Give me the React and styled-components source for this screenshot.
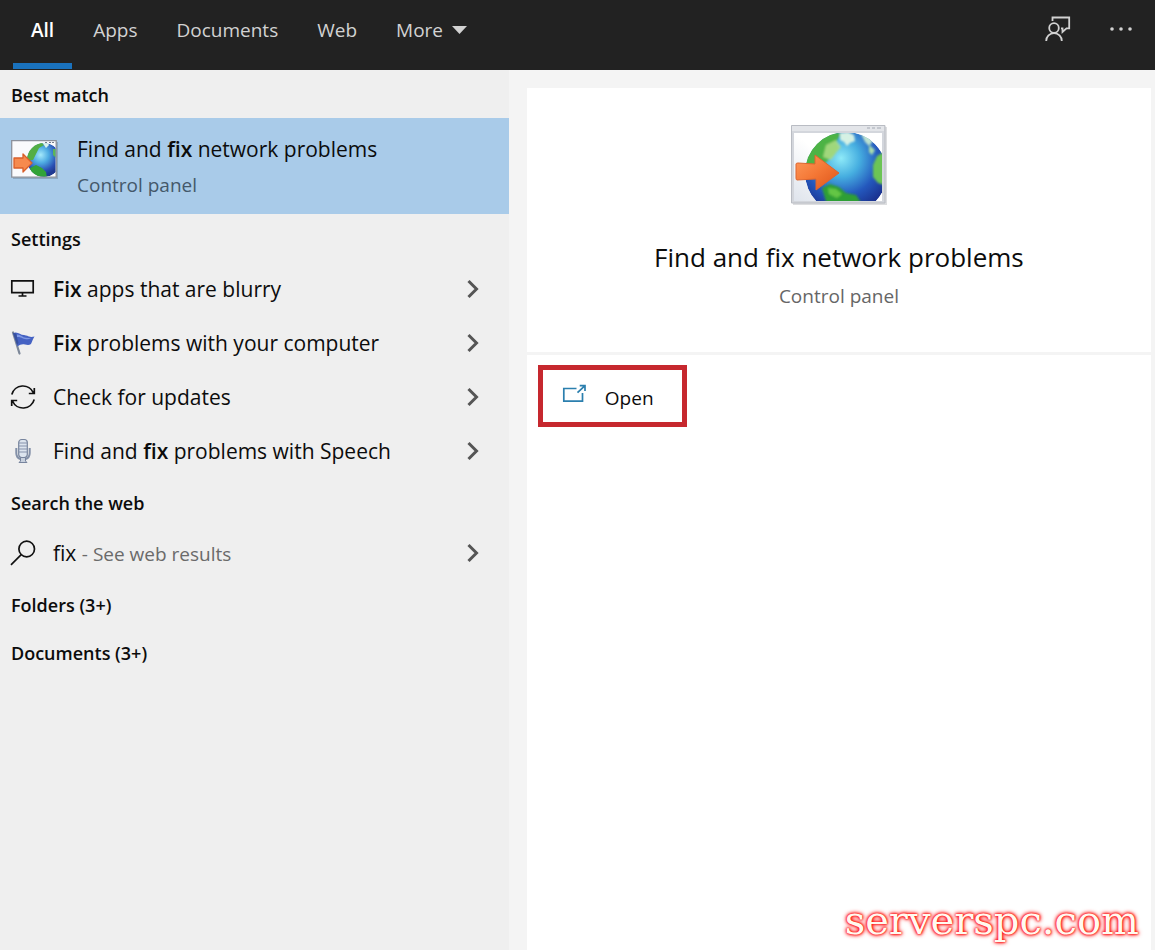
import React from 'react';
import styled, { createGlobalStyle } from 'styled-components';

const GlobalStyle = createGlobalStyle`
  *, *::before, *::after {
    box-sizing: border-box;
  }
  body {
    margin: 0;
    background: #f4f4f4;
    font-family: "Open Sans", "Noto Sans", sans-serif;
    color: #0c0c0c;
  }
  button {
    margin: 0;
    padding: 0;
    border: 0;
    background: none;
    font: inherit;
    color: inherit;
    text-align: left;
    cursor: pointer;
  }
  h1, h2, p {
    margin: 0;
  }
  svg {
    display: block;
    flex: none;
  }
`;

const Page = styled.div`
  position: relative;
  display: flex;
  flex-direction: column;
  min-height: 100vh;
`;

const Header = styled.header`
  display: flex;
  justify-content: space-between;
  height: 70px;
  padding: 0 22px 0 13px;
  background: #222;
  color: #d2d2d2;
`;

const Tabs = styled.nav`
  display: flex;
  gap: 3px;
`;

const Tab = styled.button`
  display: flex;
  align-items: center;
  gap: 9px;
  height: 69px;
  padding: 0 18px 4px;
  border-bottom: 6px solid ${({ $active }) => ($active ? '#1a72bd' : 'transparent')};
  color: ${({ $active }) => ($active ? '#fff' : 'inherit')};
  font-size: 19px;
  font-weight: ${({ $active }) => ($active ? 600 : 400)};
`;

const HeaderActions = styled.div`
  display: flex;
  align-items: center;
  gap: 38px;
  height: 58px;
`;

const Main = styled.main`
  display: grid;
  grid-template-columns: 63fr 80fr;
  flex: 1;
`;

const Results = styled.aside`
  background: #efefef;
`;

const SectionTitle = styled.h2`
  height: 48px;
  padding: 2px 11px 0;
  font-size: 18px;
  font-weight: 600;
  line-height: 46px;
`;

const BestMatch = styled.button`
  display: flex;
  gap: 18px;
  width: 100%;
  height: 96px;
  padding: 14px 11px;
  background: #a9cbe9;
`;

const BestIcon = styled.span`
  padding-top: 8px;
`;

const BestName = styled.span`
  display: block;
  font-size: 21px;
  line-height: 34px;
`;

const BestKind = styled.span`
  display: block;
  color: #44586a;
  font-size: 19px;
  line-height: 38px;
`;

const Row = styled.button`
  display: flex;
  align-items: center;
  width: 100%;
  height: 54px;
  padding: 0 29px 0 10px;
`;

const RowIcon = styled.span`
  width: 43px;
`;

const RowText = styled.span`
  flex: 1;
  font-size: 21px;
  line-height: 30px;
  white-space: nowrap;
`;

const Strong = styled.b`
  font-weight: 600;
`;

const Hint = styled.span`
  color: #6a6a6a;
  font-size: 19px;
`;

const Details = styled.section`
  display: flex;
  flex-direction: column;
  gap: 3px;
  padding: 18px 4px 0 18px;
`;

const Summary = styled.div`
  display: flex;
  flex-direction: column;
  align-items: center;
  height: 264px;
  padding-top: 37px;
  background: #fff;
`;

const SummaryTitle = styled.h1`
  margin-top: 33px;
  font-size: 26px;
  font-weight: 400;
  line-height: 38px;
`;

const SummaryKind = styled.p`
  margin-top: 6px;
  color: #666;
  font-size: 19px;
  line-height: 28px;
`;

const Actions = styled.div`
  flex: 1;
  padding: 10px 11px;
  background: #fff;
`;

const OpenButton = styled.button`
  display: flex;
  align-items: center;
  gap: 18px;
  height: 62px;
  padding: 0 28px 0 19px;
  border: 5px solid #c6282e;
  font-size: 19px;
`;

const OpenLabel = styled.span`
  padding-top: 4px;
`;

const Watermark = styled.div`
  position: absolute;
  right: 16px;
  bottom: 6px;
  color: #fffaf0;
  font-family: "DejaVu Serif", serif;
  font-size: 40px;
  line-height: 48px;
  text-shadow: 0 0 2px #f00, 0 0 3px #f22, 0 0 4px #f22, 0 0 5px #f44;
`;

const CaretIcon = () => (
  <svg width="15" height="8" viewBox="0 0 15 8" fill="currentColor">
    <path d="M0 0h15L7.500 8z" />
  </svg>
);

const FeedbackIcon = () => (
  <svg width="26" height="26" viewBox="0 0 26 26" fill="none" stroke="currentColor" strokeWidth="1.800">
    <circle cx="9" cy="12" r="4.800" />
    <path d="M1.200 25a7.800 7.800 0 0 1 15.600 0" />
    <path d="M7.500 5V1.500h16.700v10.800h-2.700L17.500 16v-3.700H16" />
  </svg>
);

const MoreIcon = () => (
  <svg width="24" height="4" viewBox="0 0 24 4" fill="currentColor">
    <circle cx="3" cy="2" r="1.800" />
    <circle cx="12" cy="2" r="1.800" />
    <circle cx="21" cy="2" r="1.800" />
  </svg>
);

const ChevronIcon = () => (
  <svg width="14" height="20" viewBox="0 0 14 20" fill="none" stroke="#555" strokeWidth="3">
    <path d="M2.500 2l8 8-8 8" />
  </svg>
);

const NetworkIcon = () => (
  <svg width="96" height="80" viewBox="0 0 96 80">
    <defs>
      <radialGradient id="sea" cx="0.44" cy="0.32" r="0.65">
        <stop offset="0" stopColor="#8eeaf8" />
        <stop offset="0.35" stopColor="#46aee0" />
        <stop offset="0.7" stopColor="#2458bd" />
        <stop offset="1" stopColor="#1b3391" />
      </radialGradient>
      <linearGradient id="arrow" x1="0" y1="0" x2="1" y2="1">
        <stop offset="0" stopColor="#ff9a5c" />
        <stop offset="0.5" stopColor="#f47735" />
        <stop offset="1" stopColor="#dc5218" />
      </linearGradient>
      <linearGradient id="page" x1="0" y1="1" x2="1" y2="0">
        <stop offset="0" stopColor="#dfe4ec" />
        <stop offset="0.5" stopColor="#fff" />
      </linearGradient>
      <filter id="soft">
        <feGaussianBlur stdDeviation="1.200" />
      </filter>
      <clipPath id="frame">
        <path d="M3 8h88v68H3z" />
      </clipPath>
      <clipPath id="globe">
        <circle cx="55" cy="48" r="41" />
      </clipPath>
    </defs>
    <path d="M2 2h94v78H2z" fill="#8d9199" opacity="0.3" />
    <path d="M0.500 0.500h93.500v77.500H0.500z" fill="#d3d6dc" stroke="#b9bcc3" />
    <path d="M1 1h92v5H1z" fill="#e3e5e9" />
    <path d="M76 2h3v2h-3zM81 2h3v2h-3zM86 2h4v2h-4z" fill="#c3c7ce" />
    <path d="M3 8h88v68H3z" fill="url(#page)" />
    <g clipPath="url(#frame)">
      <g clipPath="url(#globe)">
        <circle cx="55" cy="48" r="41" fill="url(#sea)" />
        <g filter="url(#soft)">
          <path d="M12 42c1-14 10-26 24-34h14l-5 9 3 6-6 8-7 6-3 8H14z" fill="#4db344" />
          <path d="M35 20l10-5 5 7-5 6-5 7-8-3z" fill="#b5e08a" opacity="0.8" />
          <path d="M49 8l8-1 6 3 1 6-5 2-3 3-3-4-4-2z" fill="#d5f1e4" />
          <path d="M69 7l8 3 5 6-4 5-4-4-2-4z" fill="#bde2cf" />
          <path d="M93 27l-7 4-4 9 0 12 5 6 6 2z" fill="#6cc454" />
          <path d="M78 20l6 5-3 5-3-3z" fill="#a8dcae" />
          <path d="M31 63l8-4 9 3 7 6 10 2 4 6v4H36z" fill="#2f9f35" />
          <path d="M37 63l8 1 6 5-5 4-8-4z" fill="#63c644" />
        </g>
      </g>
    </g>
    <path d="M5 39q0-1 2-1l17 1V30l24 18-23 17V54L6 55q-1 0-1-2z" fill="url(#arrow)" stroke="#dd652e" strokeLinejoin="round" />
  </svg>
);

const SmallNetworkIcon = () => (
  <svg width="48" height="40" viewBox="0 0 48 40">
    <defs>
      <radialGradient id="small-sea" cx="0.4" cy="0.35" r="0.6">
        <stop offset="0" stopColor="#a5e9fb" />
        <stop offset="0.4" stopColor="#4eabe2" />
        <stop offset="0.8" stopColor="#2a4fb4" />
        <stop offset="1" stopColor="#203a92" />
      </radialGradient>
      <filter id="small-soft">
        <feGaussianBlur stdDeviation="0.600" />
      </filter>
      <clipPath id="small-frame">
        <path d="M1.500 1.500h43v35h-43z" />
      </clipPath>
      <clipPath id="small-globe">
        <circle cx="33" cy="20" r="17" />
      </clipPath>
    </defs>
    <path d="M2 2h45v37H2z" fill="#5f7288" opacity="0.4" />
    <path d="M0.700 0.700h44.500v36.500H0.700z" fill="#fafafc" stroke="#8c919b" strokeWidth="1.300" />
    <path d="M34 2h2v1h-2zM38 2h2v1h-2zM41 2h2v1h-2z" fill="#747c8c" />
    <g clipPath="url(#small-frame)">
      <g clipPath="url(#small-globe)">
        <circle cx="33" cy="20" r="17" fill="url(#small-sea)" />
        <g filter="url(#small-soft)">
          <path d="M15 20c0-9 6-16 15-18l3 3-5 3-3 6-3 6z" fill="#52ae45" />
          <path d="M31 2l5 0 2 3-3 3-2-3z" fill="#d8f2ec" />
          <path d="M46 9l-4 0 0 6 4 4z" fill="#5cb559" />
          <path d="M19 28l6-3 6 3 4 4 1 6H22z" fill="#31a338" />
        </g>
      </g>
    </g>
    <path d="M3 18h9v-4l9 9-9 9v-4H3z" fill="#f68a4e" stroke="#d95f2a" strokeWidth="1.300" strokeLinejoin="round" />
  </svg>
);

const MonitorIcon = () => (
  <svg width="26" height="26" viewBox="0 0 26 26" fill="none" stroke="#111" strokeWidth="1.700">
    <path d="M1.800 4.800h21.400v11.900H1.800zM12.500 16.700v3.200M8.500 20h8" />
  </svg>
);

const FlagIcon = () => (
  <svg width="26" height="26" viewBox="0 0 26 26">
    <path d="M3 2.500l6.500 21" stroke="#7d8899" strokeWidth="2.200" strokeLinecap="round" />
    <path d="M3 3c5-2 7 2 11 2 3 .5 4 1 5 1.500 2 .8 4 .3 5.500 0-1.500 2-2.200 5-3.500 7.500-2 1.500-4 1-6 .5-3-.5-5 0-7.500 2z" fill="#4562c3" />
    <path d="M7 4.500c4 0 5 3 9 3.300l5 .4c-3 2-6 .8-8 .2-2-.8-3-1.500-6-1.400z" fill="#7f98e4" />
    <path d="M3 3l4 12 1.500-2L6 3.500z" fill="#38519d" />
  </svg>
);

const RefreshIcon = () => (
  <svg width="26" height="26" viewBox="0 0 26 26" fill="none" stroke="#111" strokeWidth="1.700">
    <path d="M1.800 10.500a11.500 11.500 0 0 1 21.700-1.500M24.300 4v5.500h-5.500" />
    <path d="M24.200 15.500a11.500 11.500 0 0 1-21.700 1.500M1.700 22v-5.500h5.500" />
  </svg>
);

const MicIcon = () => (
  <svg width="26" height="26" viewBox="0 0 26 26" fill="none">
    <path d="M6.300 10v5c0 3 2 5.300 4 6M19.700 10v5c0 3-2 5.300-4 6" stroke="#8390a8" strokeWidth="2" />
    <path d="M10.500 19.500h5V23l1.500 1.500H9l1.500-1.500z" fill="#c7d0dd" stroke="#77849d" />
    <rect x="8.700" y="1.500" width="8.600" height="18" rx="3" fill="#dce4ee" stroke="#77849d" strokeWidth="1.200" />
    <path d="M9 5h8M9 8h8M9 11h8M9 14h8" stroke="#8592ab" strokeWidth="1.200" />
  </svg>
);

const SearchIcon = () => (
  <svg width="26" height="26" viewBox="0 0 26 26" fill="none" stroke="#111" strokeWidth="1.700">
    <circle cx="16.700" cy="9" r="7.800" />
    <path d="M11.200 14.700L1 24.800" />
  </svg>
);

const OpenIcon = () => (
  <svg width="25" height="24" viewBox="0 0 25 24" fill="none" stroke="#2b7fae" strokeWidth="1.700">
    <path d="M14.500 4.500H1.800v12.700h18.700V9" />
    <path d="M15.500 8.700l7.500-7M17.700 1.700H23V7" />
  </svg>
);

const tabs = ['All', 'Apps', 'Documents', 'Web', 'More'];

const settings = [
  { icon: MonitorIcon, bold: 'Fix', after: ' apps that are blurry' },
  { icon: FlagIcon, bold: 'Fix', after: ' problems with your computer' },
  { icon: RefreshIcon, before: 'Check for updates' },
  { icon: MicIcon, before: 'Find and ', bold: 'fix', after: ' problems with Speech' },
];

const ResultRow = ({ icon: Icon, children }) => (
  <Row type="button">
    <RowIcon><Icon /></RowIcon>
    <RowText>{children}</RowText>
    <ChevronIcon />
  </Row>
);

const App = () => (
  <>
    <GlobalStyle />
    <Page>
      <Header>
        <Tabs>
          {tabs.map((name, i) => (
            <Tab key={name} type="button" $active={i === 0}>
              {name}
              {name === 'More' && <CaretIcon />}
            </Tab>
          ))}
        </Tabs>
        <HeaderActions>
          <button type="button" aria-label="Feedback"><FeedbackIcon /></button>
          <button type="button" aria-label="Options"><MoreIcon /></button>
        </HeaderActions>
      </Header>
      <Main>
        <Results>
          <SectionTitle>Best match</SectionTitle>
          <BestMatch type="button">
            <BestIcon><SmallNetworkIcon /></BestIcon>
            <span>
              <BestName>Find and <Strong>fix</Strong> network problems</BestName>
              <BestKind>Control panel</BestKind>
            </span>
          </BestMatch>
          <SectionTitle>Settings</SectionTitle>
          {settings.map(({ icon, before, bold, after }) => (
            <ResultRow key={`${before}${after}`} icon={icon}>
              {before}
              {bold && <Strong>{bold}</Strong>}
              {after}
            </ResultRow>
          ))}
          <SectionTitle>Search the web</SectionTitle>
          <ResultRow icon={SearchIcon}>
            fix <Hint>- See web results</Hint>
          </ResultRow>
          <SectionTitle>Folders (3+)</SectionTitle>
          <SectionTitle>Documents (3+)</SectionTitle>
        </Results>
        <Details>
          <Summary>
            <NetworkIcon />
            <SummaryTitle>Find and fix network problems</SummaryTitle>
            <SummaryKind>Control panel</SummaryKind>
          </Summary>
          <Actions>
            <OpenButton type="button">
              <OpenIcon />
              <OpenLabel>Open</OpenLabel>
            </OpenButton>
          </Actions>
        </Details>
      </Main>
      <Watermark>serverspc.com</Watermark>
    </Page>
  </>
);

export default App;
